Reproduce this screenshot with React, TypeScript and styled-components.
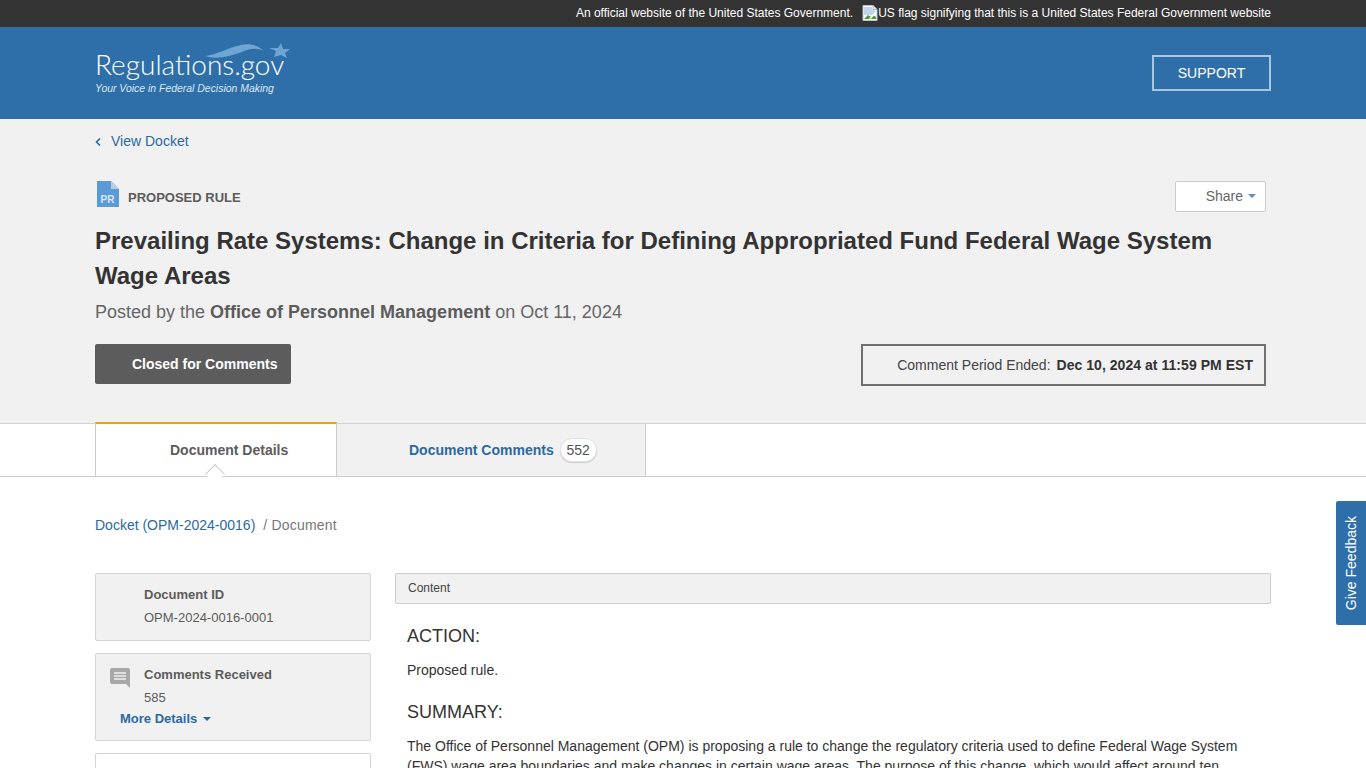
import React from "react";
import styled, { createGlobalStyle } from "styled-components";

const Global = createGlobalStyle`
  html, body { margin: 0; padding: 0; height: 768px; overflow: hidden; background: #fff; }
  body { font-family: "Liberation Sans", Arial, sans-serif; font-size: 14px; color: #333; }
  * { box-sizing: border-box; }
`;

const Page = styled.div`height: 768px; overflow: hidden; position: relative;`;
const Container = styled.div`width: 1176px; margin-left: 95px;`;

const GovBar = styled.div`height: 27px; background: #333; color: #fff; font-size: 12px; line-height: 27px;`;
const GovInner = styled(Container)`display: flex; justify-content: flex-end; align-items: center; height: 26px;`;
const GovNote = styled.span`margin-right: 9px;`;
const FlagAlt = styled.span`display: inline-flex; align-items: center;`;

const Header = styled.header`height: 92px; background: #2f6fa9;`;
const HeaderInner = styled(Container)`display: flex; justify-content: space-between; align-items: center; height: 92px;`;
const Logo = styled.div`position: relative; width: 200px; height: 62px; color: #fff; margin-top: -1px;`;
const LogoName = styled.div`
  position: absolute; left: 0; top: 6px; font-family: Lato, sans-serif; font-weight: 300;
  font-size: 28px; line-height: 32px; color: #fff; white-space: nowrap;
`;
const LogoTag = styled.div`
  position: absolute; left: 0; top: 40px; font-size: 10.45px; font-style: italic; line-height: 14px; color: #dbe8f3; white-space: nowrap;
`;
const LogoMark = styled.svg`position: absolute; left: 108px; top: 0;`;
const Support = styled.a`
  width: 119px; height: 36px; border: 2px solid #a9c6df; color: #fff; font-size: 14px;
  display: flex; align-items: center; justify-content: center;
`;

const Hero = styled.section`height: 305px; background: #f1f1f1; border-bottom: 1px solid #d4d4d4;`;
const HeroInner = styled(Container)`padding-top: 14px;`;
const BackLink = styled.a`display: flex; align-items: center; gap: 10px; color: #2c699f; font-size: 14px; line-height: 17px; height: 17px;`;
const TypeRow = styled.div`display: flex; justify-content: space-between; align-items: flex-start; margin-top: 31px; height: 32px; padding-right: 5px;`;
const TypeLabel = styled.div`display: flex; align-items: center; gap: 9px; margin-left: 2px; color: #5c5c5c; font-weight: 700; font-size: 13px; span { margin-top: 6px; }`;
const ShareButton = styled.button`
  width: 91px; height: 31px; background: #fff; border: 1px solid #ccc; border-radius: 2px; color: #666;
  font: 14px "Liberation Sans", sans-serif; display: flex; align-items: center; justify-content: flex-end; gap: 5px; padding: 0 9px 2px 0;
`;
const Caret = styled.i<{ $color: string }>`
  display: inline-block; width: 0; height: 0; border-left: 4px solid transparent; border-right: 4px solid transparent;
  border-top: 4px solid ${p => p.$color};
`;
const Title = styled.h1`margin: 10px 0 0; font-size: 24px; line-height: 35px; font-weight: 700; color: #333; width: 1140px;`;
const Posted = styled.p`margin: 7px 0 0; font-size: 18px; line-height: 24px; color: #666; b { font-weight: 700; color: #5c5c5c; }`;
const StatusRow = styled.div`display: flex; justify-content: space-between; align-items: flex-start; margin-top: 20px; padding-right: 5px;`;
const ClosedBadge = styled.div`
  width: 196px; height: 40px; background: #5c5c5c; border-radius: 2px; color: #fff; font-weight: 700; font-size: 14px;
  display: flex; align-items: center; padding-left: 37px;
`;
const PeriodBox = styled.div`
  width: 405px; height: 42px; border: 2px solid #707070; font-size: 14px; color: #444;
  display: flex; align-items: center; justify-content: flex-end; gap: 6px; padding-right: 11px;
  b { color: #333; letter-spacing: 0.04px; }
`;

const TabBar = styled.div`height: 53px; border-bottom: 1px solid #ccc; background: #fff; display: flow-root;`;
const Tabs = styled(Container)`display: flex; height: 53px; margin-top: -2px;`;
const ActiveTab = styled.div`
  position: relative; width: 242px; height: 54px; background: #fff; border: 1px solid #ccc; border-top: 2px solid #e9a21e;
  border-bottom: 0; font-weight: 700; font-size: 14px; color: #5c5c5c; display: flex; align-items: center; padding: 0 0 1px 74px;
  &::after {
    content: ""; position: absolute; left: 112px; bottom: -5px; width: 13px; height: 13px; background: #fff;
    border-left: 1px solid #ccc; border-top: 1px solid #ccc; transform: rotate(45deg);
  }
`;
const OtherTab = styled.div`
  width: 309px; height: 53px; margin-top: 2px; background: #f1f1f1; border-right: 1px solid #ccc; border-bottom: 1px solid #ccc;
  font-weight: 700; font-size: 14px; color: #2c699f; display: flex; align-items: center; gap: 6px; padding-left: 72px;
`;
const Count = styled.span`
  width: 37px; height: 24px; border-radius: 12px; background: #fff; border: 1px solid #e2e2e2; box-shadow: 0 1px 1px #ccc;
  color: #555; font-weight: 400; font-size: 14px; display: flex; align-items: center; justify-content: center;
`;

const Crumbs = styled.div`margin-top: 40px; height: 17px; line-height: 17px; font-size: 14px; color: #777; display: flex; gap: 8px; a { color: #2c699f; } span { letter-spacing: 0.2px; }`;
const Columns = styled.div`display: grid; grid-template-columns: 276px 876px; column-gap: 24px; margin-top: 39px;`;
const Sidebar = styled.aside`display: flex; flex-direction: column; gap: 12px;`;
const Card = styled.div<{ $h: number; $plain?: boolean }>`
  position: relative; height: ${p => p.$h}px; background: ${p => (p.$plain ? "#fff" : "#f1f1f1")};
  border: 1px solid #d4d4d4; border-radius: 2px; padding: 12px 0 0 48px; font-size: 13px; line-height: 17px; color: #5c5c5c;
`;
const CardTitle = styled.div`font-weight: 700; color: #5c5c5c;`;
const CardValue = styled.div`margin-top: 6px; color: #5c5c5c;`;
const CommentIcon = styled.svg`position: absolute; left: 14px; top: 14px;`;
const MoreLink = styled.a`
  display: flex; align-items: center; gap: 6px; margin: 4px 0 0 -24px; color: #2c699f; font-weight: 700; font-size: 13px;
`;
const Main = styled.main``;
const ContentBar = styled.div`height: 31px; background: #f1f1f1; border: 1px solid #ccc; border-radius: 2px; padding-left: 12px; font-size: 12px; line-height: 28px; color: #444;`;
const Body = styled.div`padding: 20px 12px 0; color: #333;`;
const Heading = styled.h4`margin: 0; font-size: 18px; font-weight: 400; line-height: 24px; color: #333;`;
const Para = styled.p`margin: 12px 0 20px; font-size: 14px; line-height: 20px; color: #333;`;

const Feedback = styled.a`
  position: absolute; right: 0; top: 501px; width: 30px; height: 124px; background: #2f6fa9; color: #fff; border-radius: 2px 0 0 2px;
  font-size: 14px; display: flex; align-items: center; justify-content: center;
  span { writing-mode: vertical-rl; transform: rotate(180deg); white-space: nowrap; }
`;

const BrokenImage = () => (
  <svg width="16" height="16" viewBox="0 0 16 16">
    <path d="M1 0.5h10l4 4v11H1z" fill="#fff" stroke="#b9c3cc" />
    <path d="M2 2h8v3h3v5H2z" fill="#c3d5e8" />
    <path d="M2 14l4-4 3 2 2-2 3 2v2H2z" fill="#4c9a3a" />
    <path d="M11 .5v4h4" fill="#e8eef3" stroke="#aab4bd" />
    <path d="M7 15l7-8" stroke="#fff" strokeWidth="1.4" />
  </svg>
);

export default function App() {
  return (
    <Page>
      <Global />
      <GovBar>
        <GovInner>
          <GovNote>An official website of the United States Government.</GovNote>
          <FlagAlt><BrokenImage />US flag signifying that this is a United States Federal Government website</FlagAlt>
        </GovInner>
      </GovBar>
      <Header>
        <HeaderInner>
          <Logo>
            <LogoName>Regulations.gov</LogoName>
            <LogoTag>Your Voice in Federal Decision Making</LogoTag>
            <LogoMark width="90" height="24" viewBox="0 0 90 24">
              <path d="M2 14C14 13 24 6 38 3c8-1.600 15-.6 22 5l2 1c-8-3-14-3-22 .5C28 14 14 18 2 14z" fill="#6fa5d3" />
              <path d="M78 1l2 6 7 0-5 4 2 5-6-3-7 2 2-6-7-3 9 0z" fill="#6fa5d3" />
            </LogoMark>
          </Logo>
          <Support>SUPPORT</Support>
        </HeaderInner>
      </Header>
      <Hero>
        <HeroInner>
          <BackLink>
            <svg width="6" height="10" viewBox="0 0 6 10"><path d="M5 1.500L1.500 5 5 8.500" fill="none" stroke="#2c699f" strokeWidth="1.6" /></svg>
            View Docket
          </BackLink>
          <TypeRow>
            <TypeLabel>
              <svg width="22" height="26" viewBox="0 0 22 26">
                <path d="M0 0h14l8 8v18H0z" fill="#5b9bd5" />
                <path d="M14 0v8h8z" fill="#b5cfe8" />
                <text x="3.500" y="22" fontSize="10" fontFamily="Liberation Sans" fill="#dce9f5">PR</text>
              </svg>
              <span>PROPOSED RULE</span>
            </TypeLabel>
            <ShareButton>Share <Caret $color="#5b8fc0" /></ShareButton>
          </TypeRow>
          <Title>Prevailing Rate Systems: Change in Criteria for Defining Appropriated Fund Federal Wage System Wage Areas</Title>
          <Posted>Posted by the <b>Office of Personnel Management</b> on Oct 11, 2024</Posted>
          <StatusRow>
            <ClosedBadge>Closed for Comments</ClosedBadge>
            <PeriodBox>Comment Period Ended: <b>Dec 10, 2024 at 11:59 PM EST</b></PeriodBox>
          </StatusRow>
        </HeroInner>
      </Hero>
      <TabBar>
        <Tabs>
          <ActiveTab>Document Details</ActiveTab>
          <OtherTab>Document Comments <Count>552</Count></OtherTab>
        </Tabs>
      </TabBar>
      <Container>
        <Crumbs><a>Docket (OPM-2024-0016)</a><span>/ Document</span></Crumbs>
        <Columns>
          <Sidebar>
            <Card $h={68}>
              <CardTitle>Document ID</CardTitle>
              <CardValue>OPM-2024-0016-0001</CardValue>
            </Card>
            <Card $h={88}>
              <CommentIcon width="20" height="20" viewBox="0 0 20 20">
                <path d="M2 0h16a2 2 0 0 1 2 2v18l-4-4H2a2 2 0 0 1-2-2V2a2 2 0 0 1 2-2z" fill="#a8a8a8" />
                <path d="M4 5h12M4 8h12M4 11h12" stroke="#eee" strokeWidth="1.300" />
              </CommentIcon>
              <CardTitle>Comments Received</CardTitle>
              <CardValue>585</CardValue>
              <MoreLink>More Details <Caret $color="#2c699f" /></MoreLink>
            </Card>
            <Card $h={60} $plain />
          </Sidebar>
          <Main>
            <ContentBar>Content</ContentBar>
            <Body>
              <Heading>ACTION:</Heading>
              <Para>Proposed rule.</Para>
              <Heading>SUMMARY:</Heading>
              <Para>The Office of Personnel Management (OPM) is proposing a rule to change the regulatory criteria used to define Federal Wage System (FWS) wage area boundaries and make changes in certain wage areas. The purpose of this change, which would affect around ten</Para>
            </Body>
          </Main>
        </Columns>
      </Container>
      <Feedback><span>Give Feedback</span></Feedback>
    </Page>
  );
}
